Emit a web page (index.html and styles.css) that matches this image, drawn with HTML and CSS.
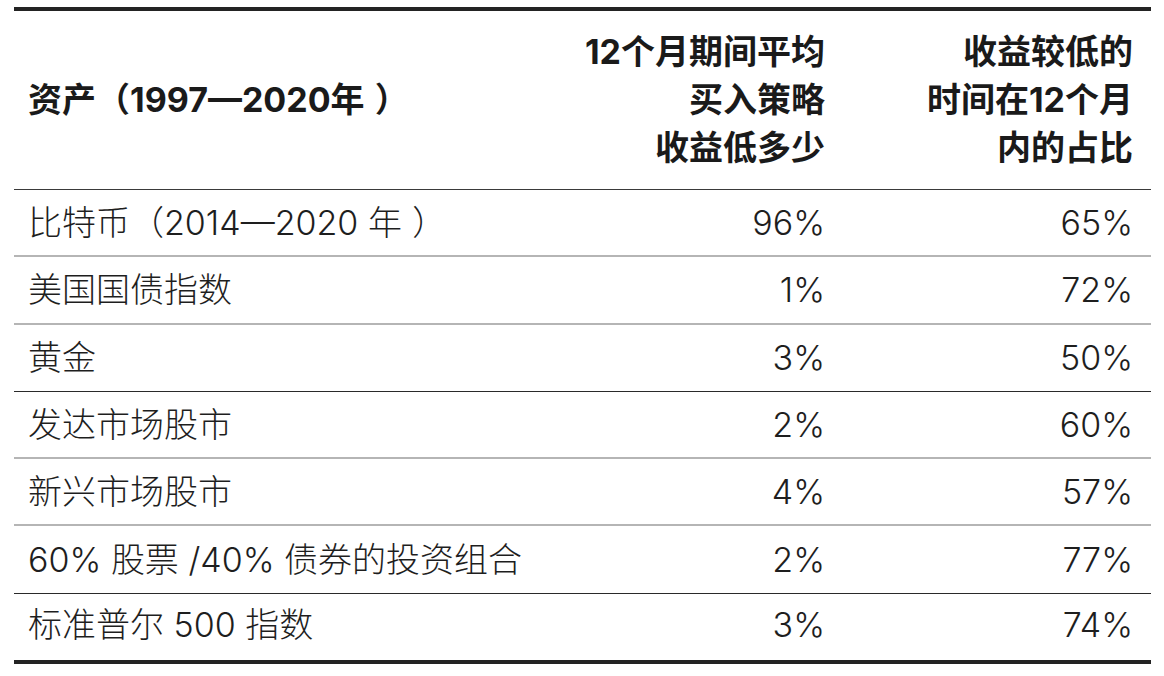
FILE: index.html
```html
<!DOCTYPE html>
<html lang="zh-CN">
<head>
<meta charset="utf-8">
<title>资产收益比较</title>
<link rel="stylesheet" href="styles.css">
</head>
<body>
<div class="table">
  <div class="row head">
    <div class="cell first">资产（1997—2020年<span class="pc">）</span></div>
    <div class="cell num">12个月期间平均<br>买入策略<br>收益低多少</div>
    <div class="cell num last">收益较低的<br>时间在12个月<br>内的占比</div>
  </div>
  <div class="row light">
    <div class="cell first">比特币（2014—2020 年<span class="pc">）</span></div>
    <div class="cell num">96%</div>
    <div class="cell num last">65%</div>
  </div>
  <div class="row light">
    <div class="cell first">美国国债指数</div>
    <div class="cell num">1%</div>
    <div class="cell num last">72%</div>
  </div>
  <div class="row dark">
    <div class="cell first">黄金</div>
    <div class="cell num">3%</div>
    <div class="cell num last">50%</div>
  </div>
  <div class="row light">
    <div class="cell first">发达市场股市</div>
    <div class="cell num">2%</div>
    <div class="cell num last">60%</div>
  </div>
  <div class="row light">
    <div class="cell first">新兴市场股市</div>
    <div class="cell num">4%</div>
    <div class="cell num last">57%</div>
  </div>
  <div class="row dark">
    <div class="cell first">60% 股票 /40% 债券的投资组合</div>
    <div class="cell num">2%</div>
    <div class="cell num last">77%</div>
  </div>
  <div class="row end">
    <div class="cell first">标准普尔 500 指数</div>
    <div class="cell num">3%</div>
    <div class="cell num last">74%</div>
  </div>
</div>
</body>
</html>
```

FILE: styles.css
```css
html, body {
  margin: 0;
  padding: 0;
  background: #ffffff;
}

body {
  font-family: Inter, "Noto Sans CJK SC", sans-serif;
  color: #1e1e1e;
}

.table {
  margin: 7px 0 0 14px;
  width: 1137px;
  border-top: 4px solid #232323;
}

.row {
  display: grid;
  grid-template-columns: 546px 283px 308px;
  align-items: center;
  box-sizing: border-box;
  height: 67.3px;
  font-size: 34px;
  font-weight: 300;
  line-height: 40px;
}

.head {
  height: 179px;
  border-bottom: 1px solid #3a3a3a;
  font-size: 34px;
  font-weight: 700;
  line-height: 48px;
  color: #1a1a1a;
}

.light {
  border-bottom: 2px solid #b5b5b5;
}

.dark {
  border-bottom: 1px solid #2a2a2a;
}

.end {
  height: 70px;
  padding-bottom: 3px;
  border-bottom: 4px solid #232323;
}

.cell {
  white-space: nowrap;
}

.pc {
  padding-left: 0.3em;
}

.first {
  padding-left: 14px;
}

.num {
  text-align: right;
  padding-right: 18px;
}

.last {
  padding-right: 18px;
}
```
